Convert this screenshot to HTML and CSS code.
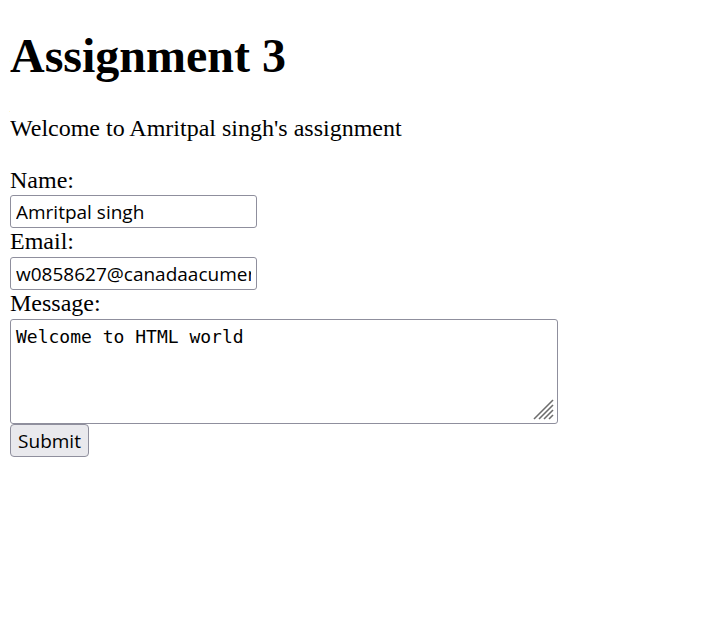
FILE: index.html
```html
<!DOCTYPE html>
<html>
<head>
<meta charset="utf-8">
<title>Assignment 3</title>
<link rel="stylesheet" href="styles.css">
</head>
<body class="page">
<h1 class="title">Assignment 3</h1>
<p class="intro">Welcome to Amritpal singh's assignment</p>
<form class="form">
<label class="label" for="name">Name:</label>
<input class="field field-first" id="name" type="text" value="Amritpal singh">
<label class="label" for="email">Email:</label>
<input class="field" id="email" type="email" value="w0858627@canadaacumen.ca">
<label class="label" for="msg">Message:</label>
<div class="message-wrap">
<textarea class="message" id="msg">Welcome to HTML world</textarea>
<svg class="grip" width="22" height="22" viewBox="0 0 22 22" aria-hidden="true">
<line x1="21" y1="7" x2="7" y2="21"/>
<line x1="21" y1="12" x2="12" y2="21"/>
<line x1="21" y1="17" x2="17" y2="21"/>
<line x1="21" y1="2" x2="2" y2="21"/>
</svg>
</div>
<button class="submit" type="submit">Submit</button>
</form>
</body>
</html>
```
FILE: styles.css
```css
html, body { background: #fff; }
.page {
  margin: 10px;
  font-family: "Liberation Serif", "Times New Roman", serif;
  font-size: 24px;
  color: #000;
}
.title {
  font-size: 48px;
  font-weight: bold;
  margin: 18px 0 0;
  line-height: 56px;
}
.intro {
  margin: 31px 0 0;
  line-height: 27px;
}
.form {
  margin-top: 25px;
  display: flex;
  flex-direction: column;
  align-items: flex-start;
}
.label {
  display: block;
  line-height: 27px;
  height: 27px;
}
.field {
  box-sizing: border-box;
  width: 247px;
  height: 33px;
  margin: 2px 0 0;
  padding: 1px 5px;
  border: 1px solid #8f8f9d;
  border-radius: 3px;
  font-family: "Open Sans", "Noto Sans", sans-serif;
  font-size: 19px;
  color: #000;
  background: #fff;
  outline: none;
}
.field-first { margin-top: 1px; }
.message-wrap {
  position: relative;
  margin-top: 2px;
  width: 548px;
  height: 105px;
}
.message {
  display: block;
  box-sizing: border-box;
  width: 548px;
  height: 105px;
  margin: 0;
  padding: 6px 5px;
  border: 1px solid #8f8f9d;
  border-radius: 3px;
  font-family: "DejaVu Sans Mono", monospace;
  font-size: 18px;
  line-height: 22px;
  color: #000;
  resize: none;
  outline: none;
}
.grip {
  position: absolute;
  right: 4px;
  bottom: 4px;
  stroke: #6d6d6d;
  stroke-width: 1.6;
}
.submit {
  box-sizing: border-box;
  width: 79px;
  height: 33px;
  margin: 0;
  padding: 0 6px;
  border: 1px solid #8f8f9d;
  border-radius: 4px;
  background: #e9e9ed;
  font-family: "Open Sans", "Noto Sans", sans-serif;
  font-size: 19px;
  color: #000;
}
```
